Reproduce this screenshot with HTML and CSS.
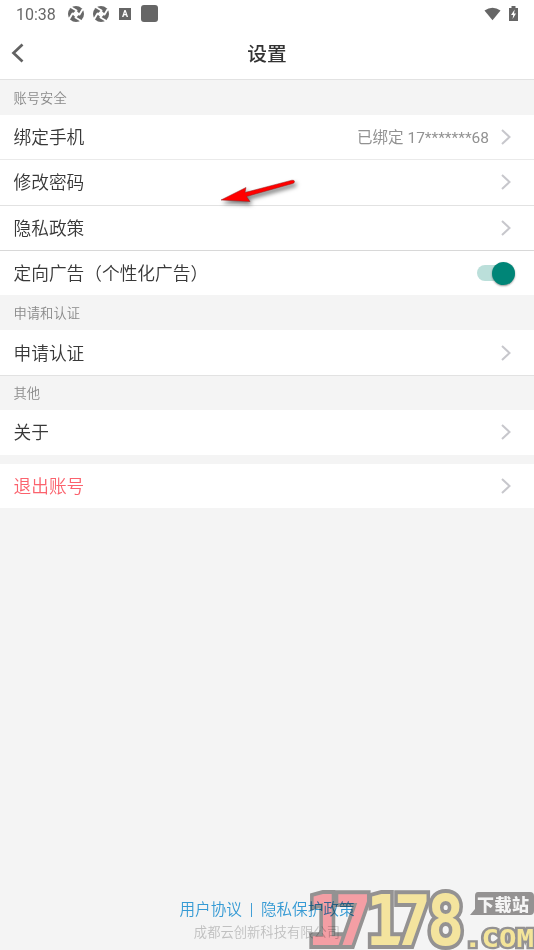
FILE: index.html
```
<!DOCTYPE html>
<html lang="zh-CN">
<head>
<meta charset="utf-8">
<title>设置</title>
<link rel="stylesheet" href="styles.css">
</head>
<body>
<svg width="0" height="0" class="defs">
  <symbol id="chevron" viewBox="0 0 12 18"><path d="M2 2l7.500 7L2 16" fill="none" stroke="#c7c7cc" stroke-width="2"/></symbol>
  <symbol id="shutter" viewBox="0 0 16 16">
    <circle cx="8" cy="8" r="8" fill="#686868"/>
    <path d="M8 4.200L11.800 8 8 11.800 4.200 8z" fill="#fff"/>
    <path d="M8.500 4.500L3.500 1.500M11.500 8.500L14.500 3.500M7.500 11.500L12.500 14.500M4.500 7.500L1.500 12.500" stroke="#fff" stroke-width="1.900" stroke-linecap="round"/>
  </symbol>
</svg>
<div class="screen">
  <header class="top">
    <div class="status">
      <span class="time">10:38</span>
      <svg class="shutter"><use href="#shutter"/></svg>
      <svg class="shutter second"><use href="#shutter"/></svg>
      <span class="abox">A</span>
      <span class="square"></span>
      <svg class="wifi" viewBox="0 0 18 14"><path d="M.5 3.300Q9-2.800 17.500 3.300L9 13.500z" fill="#666"/></svg>
      <svg class="battery" viewBox="0 0 9 15"><path d="M0 2h2.500V0h4v2H9v13H0z" fill="#666"/><path d="M5.700 3.500L2 9h2.200l-.6 4L7 7.500H5z" fill="#fff"/></svg>
    </div>
    <div class="nav">
      <svg class="back" viewBox="0 0 14 20"><path d="M11.500 1.500L2.500 10l9 8.500" fill="none" stroke="#626262" stroke-width="2.700"/></svg>
      <h1>设置</h1>
    </div>
  </header>
  <main>
    <h2>账号安全</h2>
    <div class="row line soft"><span>绑定手机</span><span class="value">已绑定 17*******68</span><svg class="chev"><use href="#chevron"/></svg></div>
    <div class="row line mid"><span>修改密码</span><svg class="chev"><use href="#chevron"/></svg></div>
    <div class="row line"><span>隐私政策</span><svg class="chev"><use href="#chevron"/></svg></div>
    <div class="row last"><span>定向广告（个性化广告）</span><span class="switch"><i></i></span></div>
    <h2>申请和认证</h2>
    <div class="row line apply"><span>申请认证</span><svg class="chev"><use href="#chevron"/></svg></div>
    <h2 class="short">其他</h2>
    <div class="row"><span>关于</span><svg class="chev"><use href="#chevron"/></svg></div>
    <div class="row logout"><span>退出账号</span><svg class="chev"><use href="#chevron"/></svg></div>
  </main>
  <footer>
    <div class="links"><span>用户协议</span><i></i><span>隐私保护政策</span></div>
    <div class="company">成都云创新科技有限公司</div>
  </footer>
  <svg class="arrow" viewBox="0 0 90 40"><path d="M5 25L30 12.500l-1 5L76 5.200q2.500-.2 2.500 1.300t-1.700 2L30.500 21.500l3.500 5z" fill="#f00" stroke="#8c2020" stroke-width=".5"/></svg>
  <svg class="mark" viewBox="0 0 226 66">
    <g class="digits">
      <text class="red" transform="translate(0 61) scale(.9 1)" x="20 50">17</text>
      <text class="yellow" transform="translate(0 61) scale(.9 1)" x="85 116 153">178</text>
    </g>
    <text class="com" x="156" y="62.500" textLength="70" lengthAdjust="spacingAndGlyphs">.COM</text>
    <path d="M170 8h52q4 0 4 4v15q0 4-4 4h-60l5-6V12q0-4 3-4z" fill="#9b9999"/>
    <text class="badge" x="169" y="27" textLength="52">下载站</text>
  </svg>
</div>
</body>
</html>
```
FILE: styles.css
```
* { box-sizing: border-box; }
body { margin: 0; font-family: Roboto, "Noto Sans CJK SC", sans-serif; color: #3c3c3c; }
.defs { position: absolute; }
.screen { position: relative; width: 534px; height: 950px; background: #f4f4f4; display: flex; flex-direction: column; overflow: hidden; }
.top { height: 80px; background: #fff; border-bottom: 1px solid #e2e2e2; }
.status { height: 27px; display: flex; align-items: center; padding: 0 16px 0 16px; }
.time { font-size: 16px; width: 52px; color: #686868; padding-top: 1px; }
.shutter { width: 16px; height: 16px; }
.second { margin-left: 9px; }
.abox { margin-left: 10px; width: 12px; height: 12px; background: #666; color: #fff; font: bold 9px/12px Roboto, sans-serif; text-align: center; }
.square { margin-left: 10px; width: 17px; height: 17px; border-radius: 3px; background: #666; }
.wifi { margin-left: auto; width: 17px; height: 14px; margin-right: 8px; }
.battery { width: 9px; height: 15px; margin-top: -1px; }
.nav { height: 52px; display: flex; align-items: center; padding-left: 11px; }
.back { width: 14px; height: 20px; }
h1 { flex: 1; margin: 3px 25px 0 0; text-align: center; font-size: 19.700px; font-weight: 500; line-height: 30px; color: #333; }
h2 { margin: 0; height: 35px; line-height: 37px; padding-left: 13.500px; font-size: 13.300px; font-weight: 350; color: #8a8a8a; }
h2.short { height: 34px; line-height: 35px; }
.row { height: 45px; background: #fff; display: flex; align-items: center; padding: 1px 22px 0 13.500px; font-size: 17.700px; font-weight: 350; line-height: 26px; color: #383838; }
.line { height: 45px; border-bottom: 1px solid #d8d8d8; }
.soft { border-bottom-color: #eaeaea; padding-top: 2px; }
.mid { height: 46px; border-bottom-color: #e2e2e2; }
.apply { height: 46px; border-bottom-color: #e2e2e2; padding-top: 2px; }
.last { height: 44px; padding: 1px 19px 0 13.500px; }
.chev { width: 12px; height: 18px; margin: -2px 0 0 auto; }
.value { margin-left: auto; font-size: 15.500px; font-weight: 400; color: #929292; }
.value + .chev { margin-left: 11px; }
.switch { margin: -1px 0 0 auto; width: 38px; height: 16px; border-radius: 8px; background: #bbdfda; display: flex; align-items: center; justify-content: flex-end; }
.switch i { width: 23px; height: 23px; border-radius: 50%; background: #008577; box-shadow: 0 1px 2px #0006; flex: none; }
.logout { margin-top: 9px; height: 44px; color: #fb626d; }
footer { margin-top: auto; height: 52px; display: flex; flex-direction: column; align-items: center; }
.links { display: flex; align-items: center; font-size: 15.600px; font-weight: 350; line-height: 24px; color: #359ad4; }
.links i { width: 1px; height: 14px; margin: 0 9px; background: #429fd6; }
.company { font-size: 13.300px; font-weight: 350; line-height: 22px; color: #c0c0c0; }
.arrow { position: absolute; left: 216px; top: 175px; width: 90px; height: 40px; filter: drop-shadow(2px 3px 2px #0008); }
.mark { position: absolute; left: 308px; top: 884px; width: 226px; height: 66px; mix-blend-mode: multiply; }
.digits, .com { font-family: "DejaVu Sans Mono", monospace; font-weight: 700; paint-order: stroke; stroke-linejoin: miter; }
.digits { font-size: 69px; stroke: #9b9999; stroke-width: 8px; text-anchor: middle; }
.red { fill: #ffa5ac; }
.yellow { fill: #ffefa5; }
.com { font-size: 24px; fill: #fff0a0; stroke: #9b9999; stroke-width: 4.500px; }
.badge { font: 900 17px "Noto Sans CJK SC", sans-serif; fill: #fff; }
```
